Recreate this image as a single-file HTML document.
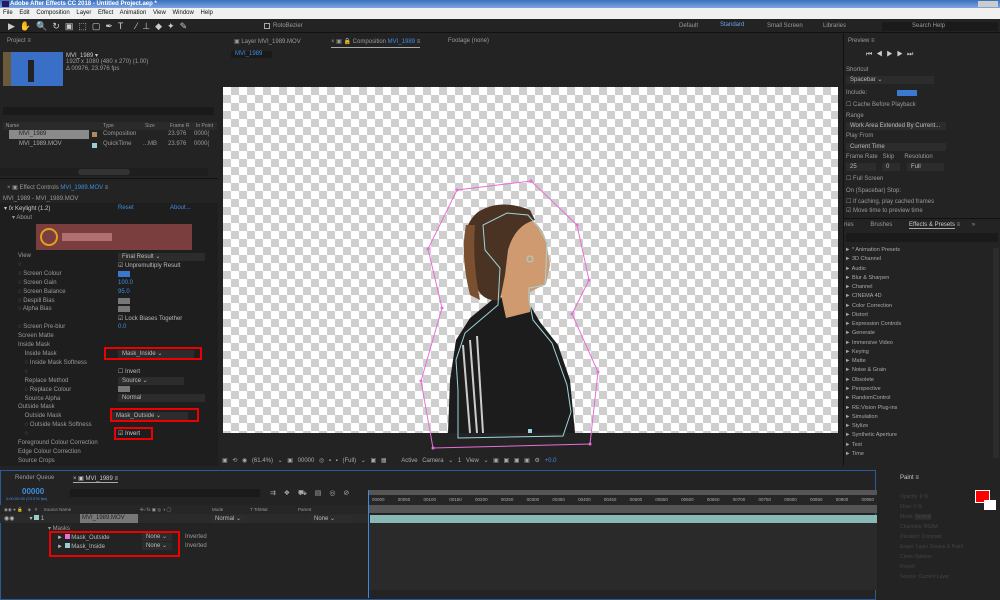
<!DOCTYPE html>
<html><head><meta charset="utf-8"><style>
*{margin:0;padding:0;box-sizing:border-box}
body{width:1000px;height:600px;overflow:hidden;background:#232323;font-family:"Liberation Sans",sans-serif;font-size:6px;color:#9a9a9a;position:relative}
.a{position:absolute;white-space:nowrap}
.blue{color:#3d8ee0}
.red{position:absolute;border:2px solid #e00;}
.dd{position:absolute;background:#2c2c2c;color:#bbb;padding-left:4px;line-height:8px;height:8px}
.chk{background-color:#fff;background-image:repeating-conic-gradient(#cfcfcf 0 25%,#fff 0 50%);background-size:16px 16px}
</style></head><body>
<!-- title -->
<div class="a" style="left:0;top:0;width:1000px;height:8px;background:linear-gradient(#3a6fc0,#7ea6e0)"></div>
<div class="a" style="left:10px;top:0;color:#fff;font-weight:bold;font-size:6px;line-height:8px">Adobe After Effects CC 2018 - Untitled Project.aep *</div>
<div class="a" style="left:2px;top:1px;width:7px;height:6px;background:#2a1a5a"></div>
<div class="a" style="left:978px;top:1px;width:20px;height:6px;background:#ccc"></div>
<!-- menu -->
<div class="a" style="left:0;top:8px;width:1000px;height:11px;background:#f0f0f0;color:#111;line-height:11px;padding-left:3px;word-spacing:5px">File Edit Composition Layer Effect Animation View Window Help</div>
<!-- toolbar -->
<div class="a" style="left:0;top:19px;width:1000px;height:14px;background:#232323;border-bottom:1px solid #111"></div>
<div class="a" style="left:8px;top:21px;color:#ccc;font-size:9px;letter-spacing:5px">▶✋🔍↻▣⬚▢✒T ⁄⊥◆✦✎</div>
<div class="a" style="left:264px;top:23px;width:6px;height:6px;border:1px solid #aaa"></div>
<div class="a" style="left:273px;top:23px">RotoBezier</div>
<div class="a" style="left:679px;top:23px">Default</div>
<div class="a" style="left:720px;top:22px;color:#6aa0e8">Standard</div>
<div class="a" style="left:767px;top:23px">Small Screen</div>
<div class="a" style="left:823px;top:23px">Libraries</div>
<div class="a" style="left:882px;top:22px;width:116px;height:9px;background:#1a1a1a;padding-left:30px;line-height:9px">Search Help</div>

<!-- Project panel -->
<div class="a" style="left:0;top:34px;width:218px;height:142px;background:#232323"></div>
<div class="a" style="left:7px;top:38px">Project ≡</div>
<div class="a" style="left:3px;top:52px;width:60px;height:34px;background:#3a6fc8"><div class="a" style="left:25px;top:8px;width:6px;height:22px;background:#222"></div><div class="a" style="left:0;top:0;width:8px;height:34px;background:#6a5a3a"></div></div>
<div class="a" style="left:66px;top:52px;color:#ccc">MVI_1989 ▾</div>
<div class="a" style="left:66px;top:59px">1920 x 1080 (480 x 270) (1.00)</div>
<div class="a" style="left:66px;top:66px">Δ 00976, 23.976 fps</div>
<div class="a" style="left:3px;top:107px;width:211px;height:8px;background:#1a1a1a"></div>
<div class="a" style="left:3px;top:122px;width:214px;height:8px;background:#2a2a2a;line-height:8px;font-size:5px">&nbsp;&nbsp;Name<span style="position:absolute;left:100px">Type</span><span style="position:absolute;left:142px">Size</span><span style="position:absolute;left:167px">Frame R</span><span style="position:absolute;left:193px">In Point</span></div>
<div class="a" style="left:9px;top:130px;width:80px;height:9px;background:#8a8a8a;color:#222;line-height:9px;padding-left:10px">MVI_1989</div>
<div class="a" style="left:92px;top:132px;width:5px;height:5px;background:#b08860"></div>
<div class="a" style="left:103px;top:131px">Composition</div><div class="a" style="left:168px;top:131px">23.976</div><div class="a" style="left:194px;top:131px">0000(</div>
<div class="a" style="left:19px;top:141px;color:#aaa">MVI_1989.MOV</div>
<div class="a" style="left:92px;top:143px;width:5px;height:5px;background:#9cc"></div>
<div class="a" style="left:103px;top:141px">QuickTime</div><div class="a" style="left:143px;top:141px">...MB</div><div class="a" style="left:168px;top:141px">23.976</div><div class="a" style="left:194px;top:141px">0000(</div>
<div class="a" style="left:0;top:168px;width:208px;height:8px;background:#1e1e1e"></div>
<div class="a" style="left:78px;top:169px;width:52px;height:6px;background:#333;border-radius:3px"></div>

<!-- Effect controls -->
<div class="a" style="left:0;top:178px;width:218px;height:288px;background:#232323;border-top:1px solid #111"></div>
<div class="a" style="left:7px;top:184px">× ▣ Effect Controls <span class="blue">MVI_1989.MOV</span> ≡</div>
<div class="a" style="left:3px;top:196px">MVI_1989 - MVI_1989.MOV</div>
<div class="a" style="left:0;top:203px;width:218px;height:263px;background:#1e1e1e"></div>
<div class="a" style="left:4px;top:205px;color:#ccc">▾ <i>fx</i> Keylight (1.2)</div>
<div class="a blue" style="left:118px;top:205px">Reset</div><div class="a blue" style="left:170px;top:205px">About...</div>
<div class="a" style="left:12px;top:214px">▾ About</div>
<div class="a" style="left:36px;top:224px;width:156px;height:26px;background:#7a3e3e"><div class="a" style="left:4px;top:4px;width:18px;height:18px;border:2px solid #e0a020;border-radius:50%"></div><div class="a" style="left:26px;top:9px;width:50px;height:8px;background:#b07070"></div></div>
<div class="a" style="left:0;top:252px;width:218px;line-height:8.9px;padding-left:18px" >
View<br>◌<br>◌ Screen Colour<br>◌ Screen Gain<br>◌ Screen Balance<br>◌ Despill Bias<br>◌ Alpha Bias<br><br>◌ Screen Pre-blur<br>Screen Matte<br>Inside Mask<br>&nbsp;&nbsp;&nbsp;&nbsp;Inside Mask<br>&nbsp;&nbsp;&nbsp;&nbsp;◌ Inside Mask Softness<br>&nbsp;&nbsp;&nbsp;&nbsp;◌<br>&nbsp;&nbsp;&nbsp;&nbsp;Replace Method<br>&nbsp;&nbsp;&nbsp;&nbsp;◌ Replace Colour<br>&nbsp;&nbsp;&nbsp;&nbsp;Source Alpha<br>Outside Mask<br>&nbsp;&nbsp;&nbsp;&nbsp;Outside Mask<br>&nbsp;&nbsp;&nbsp;&nbsp;◌ Outside Mask Softness<br>&nbsp;&nbsp;&nbsp;&nbsp;◌<br>Foreground Colour Correction<br>Edge Colour Correction<br>Source Crops</div>
<div class="dd" style="left:118px;top:253px;width:87px">Final Result ⌄</div>
<div class="a" style="left:118px;top:262px;color:#bbb">☑ Unpremultiply Result</div>
<div class="a" style="left:118px;top:271px;width:12px;height:6px;background:#3a78d0"></div>
<div class="a" style="left:118px;top:280px"><span class="blue">100.0</span></div>
<div class="a" style="left:118px;top:289px"><span class="blue">95.0</span></div>
<div class="a" style="left:118px;top:298px;width:12px;height:6px;background:#777"></div>
<div class="a" style="left:118px;top:306px;width:12px;height:6px;background:#777"></div>
<div class="a" style="left:118px;top:315px;color:#bbb">☑ Lock Biases Together</div>
<div class="a" style="left:118px;top:324px"><span class="blue">0.0</span></div>
<div class="dd" style="left:118px;top:350px;width:76px">Mask_Inside ⌄</div>
<div class="red" style="left:104px;top:347px;width:98px;height:13px"></div>
<div class="a" style="left:118px;top:368px;color:#bbb">☐ Invert</div>
<div class="dd" style="left:118px;top:377px;width:66px">Source ⌄</div>
<div class="a" style="left:118px;top:386px;width:12px;height:6px;background:#777"></div>
<div class="dd" style="left:118px;top:394px;width:87px">Normal</div>
<div class="dd" style="left:112px;top:412px;width:76px">Mask_Outside ⌄</div>
<div class="red" style="left:110px;top:408px;width:89px;height:14px"></div>
<div class="a" style="left:118px;top:430px;color:#ccc">☑ Invert</div>
<div class="red" style="left:114px;top:427px;width:39px;height:13px"></div>

<!-- Comp panel -->
<div class="a" style="left:220px;top:34px;width:623px;height:434px;background:#232323"></div>
<div class="a" style="left:234px;top:38px">▣ Layer MVI_1989.MOV</div>
<div class="a" style="left:331px;top:38px;border-bottom:1px solid #aaa;padding-bottom:2px">× ▣ 🔒 Composition <span class="blue">MVI_1989</span> ≡</div>
<div class="a" style="left:448px;top:38px">Footage (none)</div>
<div class="a blue" style="left:231px;top:51px;width:41px;height:7px;background:#1a1a1a;padding-left:4px">MVI_1989</div>
<div class="a chk" style="left:223px;top:87px;width:615px;height:346px"></div>
<div class="a" style="left:222px;top:433px;width:620px;height:22px;background:#232323"></div>
<svg class="a" style="left:0;top:0" width="1000" height="600">
<path d="M492 300 L470 318 L456 340 L450 380 L448 433 L575 433 L570 380 L558 345 L540 322 L530 305 L528 290 Z" fill="#1c1c1c"/>
<path d="M505 222 Q535 208 546 240 L550 265 L546 284 L530 292 L530 312 L506 318 L500 290 Z" fill="#d09a70"/>
<path d="M478 212 Q500 198 530 210 L535 220 Q515 225 508 250 L505 275 L500 300 Q485 302 478 290 Q468 275 466 250 Q462 225 478 212Z" fill="#4a3322"/>
<path d="M466 225 Q460 255 470 295 L480 300 Q472 260 475 225Z" fill="#7a5030"/>
<path d="M463 345 L470 433 M470 340 L477 433 M477 336 L483 433" stroke="#ccc" stroke-width="2"/>
<polygon points="457,190 531,181 577,225 589,280 572,314 598,372 590,444 433,448 421,381 442,308 428,249" fill="none" stroke="#e86ed8" stroke-width="1"/>
<g fill="#e86ed8"><circle cx="457" cy="190" r="1.5"/><circle cx="531" cy="181" r="1.5"/><circle cx="577" cy="225" r="1.5"/><circle cx="589" cy="280" r="1.5"/><circle cx="572" cy="314" r="1.5"/><circle cx="598" cy="372" r="1.5"/><circle cx="590" cy="444" r="1.5"/><circle cx="433" cy="448" r="1.5"/><circle cx="421" cy="381" r="1.5"/><circle cx="442" cy="308" r="1.5"/><circle cx="428" cy="249" r="1.5"/></g>
<polygon points="507,213 528,215 539,228 547,243 546,268 545,285 529,288 529,300 533,320 552,343 567,385 571,412 563,436 458,438 458,390 456,360 465,333 498,305 500,268 485,250 483,225" fill="none" stroke="#9ed6dc" stroke-width="1"/>
<circle cx="530" cy="259" r="3" fill="none" stroke="#9ed6dc"/>
<rect x="528" y="429" width="4" height="4" fill="#9ed6dc"/>
</svg>
<div class="a" style="left:222px;top:457px;width:620px;color:#aaa;white-space:nowrap;word-spacing:3px">▣ ⟲ ◉ (61.4%) ⌄ ▣ 00000 ◎ ▪ ▪ (Full) ⌄ ▣ ▦ <span style="margin-left:10px">Active Camera ⌄</span> 1 View ⌄ ▣ ▣ ▣ ▣ ⚙ <span class="blue">+0.0</span></div>

<!-- Right panels -->
<div class="a" style="left:843px;top:34px;width:157px;height:184px;background:#232323;border-left:1px solid #111"></div>
<div class="a" style="left:848px;top:38px">Preview ≡</div>
<div class="a" style="left:866px;top:51px;color:#ccc;font-size:7px;letter-spacing:4px">⏮◀▶▶⏭</div>
<div class="a" style="left:846px;top:67px">Shortcut</div>
<div class="dd" style="left:846px;top:76px;width:88px">Spacebar ⌄</div>
<div class="a" style="left:846px;top:90px">Include:</div>
<div class="a" style="left:897px;top:90px;width:20px;height:6px;background:#3a7ad0"></div>
<div class="a" style="left:846px;top:101px">☐ Cache Before Playback</div>
<div class="a" style="left:846px;top:113px">Range</div>
<div class="dd" style="left:846px;top:122px;width:100px">Work Area Extended By Current...</div>
<div class="a" style="left:846px;top:133px">Play From</div>
<div class="dd" style="left:846px;top:143px;width:100px">Current Time</div>
<div class="a" style="left:846px;top:154px">Frame Rate&nbsp;&nbsp; Skip&nbsp;&nbsp;&nbsp;&nbsp;&nbsp; Resolution</div>
<div class="dd" style="left:846px;top:163px;width:30px">25</div><div class="dd" style="left:882px;top:163px;width:18px">0</div><div class="dd" style="left:907px;top:163px;width:37px">Full</div>
<div class="a" style="left:846px;top:175px">☐ Full Screen</div>
<div class="a" style="left:846px;top:188px">On (Spacebar) Stop:</div>
<div class="a" style="left:846px;top:198px">☐ If caching, play cached frames</div>
<div class="a" style="left:846px;top:207px">☑ Move time to preview time</div>
<div class="a" style="left:843px;top:218px;width:157px;height:248px;background:#232323;border-left:1px solid #111;border-top:1px solid #111"></div>
<div class="a" style="left:844px;top:222px">ries&nbsp;&nbsp;&nbsp;&nbsp;&nbsp;&nbsp;&nbsp;&nbsp;&nbsp; Brushes&nbsp;&nbsp;&nbsp;&nbsp;&nbsp;&nbsp;&nbsp;&nbsp;&nbsp; <span style="color:#ccc;border-bottom:1px solid #aaa">Effects &amp; Presets</span> ≡&nbsp;&nbsp;&nbsp;&nbsp;&nbsp;&nbsp;&nbsp;»</div>
<div class="a" style="left:846px;top:233px;width:152px;height:9px;background:#1a1a1a"></div>
<div class="a" style="left:845px;top:246px;line-height:9.27px;color:#aaa;font-size:5.5px">► * Animation Presets<br>► 3D Channel<br>► Audio<br>► Blur &amp; Sharpen<br>► Channel<br>► CINEMA 4D<br>► Color Correction<br>► Distort<br>► Expression Controls<br>► Generate<br>► Immersive Video<br>► Keying<br>► Matte<br>► Noise &amp; Grain<br>► Obsolete<br>► Perspective<br>► RandomControl<br>► RE:Vision Plug-ins<br>► Simulation<br>► Stylize<br>► Synthetic Aperture<br>► Text<br>► Time</div>
<div class="a" style="left:993px;top:248px;width:6px;height:210px;background:#2c2c2c"></div>

<!-- Timeline -->
<div class="a" style="left:0;top:470px;width:876px;height:130px;background:#232323;border:1px solid #2a5a9a"></div>
<div class="a" style="left:15px;top:475px">Render Queue</div>
<div class="a" style="left:73px;top:475px;color:#ccc;border-bottom:1px solid #aaa">× ▣ MVI_1989 ≡</div>
<div class="a blue" style="left:22px;top:487px;font-size:8px;font-weight:bold">00000</div>
<div class="a blue" style="left:6px;top:496px;font-size:4px">0:00:00:00 (23.976 fps)</div>
<div class="a" style="left:70px;top:489px;width:190px;height:8px;background:#1a1a1a"></div>
<div class="a" style="left:270px;top:489px;color:#aaa;font-size:7px;word-spacing:6px">⇉ ❖ ⛟ ▤ ◎ ⊘</div>
<div class="a" style="left:0;top:505px;width:368px;height:9px;background:#262626;font-size:4.5px;line-height:9px;padding-left:4px">◉◉ ● 🔒&nbsp;&nbsp;&nbsp; ◈&nbsp;&nbsp; #&nbsp;&nbsp;&nbsp;&nbsp; Source Name<span style="position:absolute;left:140px">✣ ⁄ fx ▣ ◎ ◑ ◯</span><span style="position:absolute;left:212px">Mode</span><span style="position:absolute;left:250px">T TrkMat</span><span style="position:absolute;left:298px">Parent</span></div>
<div class="a" style="left:0;top:514px;width:368px;height:9px;background:#2a2a2a"></div>
<div class="a" style="left:4px;top:515px;color:#bbb">◉◉&nbsp;&nbsp;&nbsp;&nbsp;&nbsp;&nbsp;&nbsp;&nbsp; ▾ <span style="display:inline-block;width:5px;height:5px;background:#9cc"></span> 1</div>
<div class="a" style="left:80px;top:514px;width:58px;height:9px;background:#777;color:#222;line-height:9px;padding-left:2px">MVI_1989.MOV</div>
<div class="dd" style="left:211px;top:515px;width:35px">Normal ⌄</div>
<div class="dd" style="left:310px;top:515px;width:42px">None ⌄</div>
<div class="a" style="left:48px;top:525px">▾ Masks</div>
<div class="a" style="left:57px;top:534px;color:#bbb">► <span style="display:inline-block;width:5px;height:5px;background:#e86ed8"></span> Mask_Outside</div>
<div class="a" style="left:57px;top:543px;color:#bbb">► <span style="display:inline-block;width:5px;height:5px;background:#9cc"></span> Mask_Inside</div>
<div class="dd" style="left:142px;top:533px;width:30px">None ⌄</div><div class="dd" style="left:142px;top:542px;width:30px">None ⌄</div>
<div class="a" style="left:185px;top:534px">Inverted</div><div class="a" style="left:185px;top:543px">Inverted</div>
<div class="red" style="left:49px;top:531px;width:131px;height:26px"></div>
<div class="a" style="left:368px;top:490px;width:512px;height:5px;background:#555"></div>
<div class="a" style="left:368px;top:495px;width:512px;height:10px;background:#262626;font-size:4.5px;color:#aaa;word-spacing:12px;white-space:nowrap;padding-left:4px;line-height:10px">00000 00050 00100 00150 00200 00250 00300 00350 00400 00450 00500 00550 00600 00650 00700 00750 00800 00850 00900 00950</div>
<div class="a" style="left:368px;top:505px;width:512px;height:8px;background:#555"></div>
<div class="a" style="left:370px;top:515px;width:509px;height:8px;background:#8ab8b4"></div>
<div class="a" style="left:368px;top:523px;width:512px;height:67px;background:#2a2a2a"></div>
<div class="a" style="left:368px;top:490px;width:1px;height:108px;background:#3a8ae0"></div>

<!-- Paint -->
<div class="a" style="left:877px;top:470px;width:123px;height:130px;background:#232323"></div>
<div class="a" style="left:900px;top:475px;color:#ccc">Paint ≡</div>
<div class="a" style="left:975px;top:490px;width:15px;height:13px;background:#f00;border:1px solid #fff"></div>
<div class="a" style="left:984px;top:500px;width:12px;height:10px;background:#fff"></div>
<div class="a" style="left:900px;top:492px;color:#444;line-height:10px;font-size:5px">Opacity: 0 %<br>Flow: 0 %<br>Mode: <span style="background:#2c2c2c">Normal</span><br>Channels: RGBA<br>Duration: Constant<br>Erase: Layer Source &amp; Paint<br>Clone Options<br>Preset:<br>Source: Current Layer</div>
</body></html>
